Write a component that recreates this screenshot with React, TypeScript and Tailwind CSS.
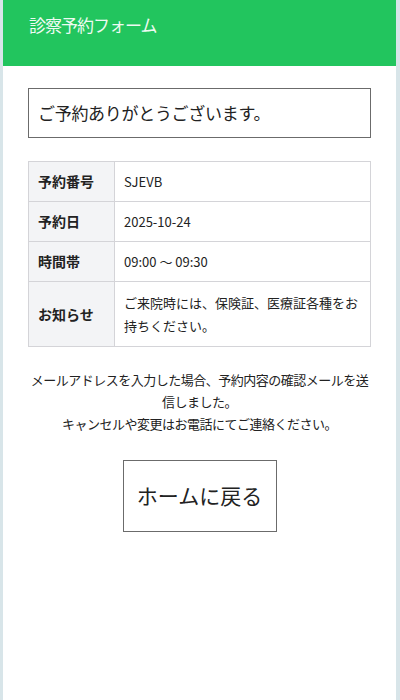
const FONT = {
  fontFamily: '"Noto Sans CJK JP", "Noto Sans", sans-serif',
};

const ROWS = [
  { label: "予約番号", value: "SJEVB" },
  { label: "予約日", value: "2025-10-24" },
  { label: "時間帯", value: "09:00 〜 09:30" },
  { label: "お知らせ", value: "ご来院時には、保険証、医療証各種をお持ちください。" },
];

export default function App() {
  return (
    <div
      className="flex min-h-screen bg-[#d8e5e9] pl-[3px] pr-[4px] text-[#222]"
      style={FONT}
    >
      <div className="flex min-h-screen w-full flex-col bg-white">
        {/* Header */}
        <header className="h-[66px] bg-[#22c55e] pl-[26px] pt-[13px]">
          <h1 className="text-[17px] leading-6 tracking-[-1px] text-[#eefaf2]">
            診察予約フォーム
          </h1>
        </header>

        <main className="flex flex-col px-[25px] pt-[22px]">
          {/* Thanks box */}
          <div className="flex h-[50px] items-center border border-[#6b6b6b] px-[9px]">
            <p className="text-[17px] tracking-[-0.3px]">ご予約ありがとうございます。</p>
          </div>

          {/* Details */}
          <table className="mt-[23px] w-full border-collapse border border-[#d4d4d8] text-left">
            <tbody>
              {ROWS.map((r, i) => (
                <tr key={r.label} className="border-b border-[#d4d4d8]">
                  <th className="w-[86px] border-r border-[#d4d4d8] bg-[#f3f4f6] px-[9px] py-[8px] text-[14px] font-bold">
                    {r.label}
                  </th>
                  <td
                    className={
                      i === ROWS.length - 1
                        ? "px-[9px] py-[9px] text-[13px] leading-[23px]"
                        : "px-[9px] py-[8px] text-[13px] leading-[23px]"
                    }
                  >
                    {r.value}
                  </td>
                </tr>
              ))}
            </tbody>
          </table>

          {/* Note */}
          <p className="mt-[22px] text-center text-[13px] leading-[22px] tracking-[-0.5px]">
            メールアドレスを入力した場合、予約内容の確認メールを送信しました。
            <br />
            キャンセルや変更はお電話にてご連絡ください。
          </p>

          {/* Home button */}
          <div className="mt-[25px] flex justify-center">
            <button className="h-[72px] w-[154px] border border-[#6b6b6b] bg-white text-[21px]">
              ホームに戻る
            </button>
          </div>
        </main>
      </div>
    </div>
  );
}
